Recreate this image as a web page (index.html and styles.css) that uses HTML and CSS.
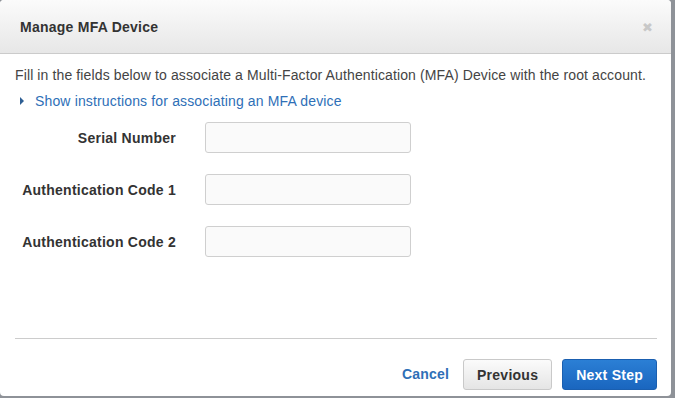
FILE: index.html
```html
<!DOCTYPE html>
<html lang="en">
<head>
    <meta charset="UTF-8">
    <title>Manage MFA Device</title>
    <link rel="stylesheet" href="styles.css">
</head>
<body>
    <div class="dialog">
        <div class="dialog-header">
            <h1>Manage MFA Device</h1>
            <span class="close">&#x2716;</span>
        </div>
        <div class="dialog-body">
            <p class="intro">Fill in the fields below to associate a Multi-Factor Authentication (MFA) Device with the root account.</p>
            <p class="toggle"><span class="caret"></span><a href="#">Show instructions for associating an MFA device</a></p>
            <form class="fields" action="#">
                <div class="row">
                    <label for="serial">Serial Number</label>
                    <input id="serial" type="text">
                </div>
                <div class="row">
                    <label for="code1">Authentication Code 1</label>
                    <input id="code1" type="text">
                </div>
                <div class="row">
                    <label for="code2">Authentication Code 2</label>
                    <input id="code2" type="text">
                </div>
            </form>
        </div>
        <div class="dialog-footer">
            <a class="cancel" href="#">Cancel</a>
            <button class="btn">Previous</button>
            <button class="btn primary">Next Step</button>
        </div>
    </div>
</body>
</html>
```

FILE: styles.css
```css
* {
    box-sizing: border-box;
    margin: 0;
    padding: 0;
}

body {
    background-color: #8e9298;
    font-family: Arial, "Liberation Sans", sans-serif;
    font-size: 14px;
    color: #333;
    width: 675px;
    height: 398px;
    overflow: hidden;
}

a {
    color: #2e6fb7;
    text-decoration: none;
}

.dialog {
    width: 671px;
    height: 396px;
    background-color: #fff;
    border-radius: 4px;
    display: flex;
    flex-direction: column;
    overflow: hidden;
}

.dialog-header {
    height: 54px;
    flex-shrink: 0;
    display: flex;
    align-items: center;
    justify-content: space-between;
    padding: 0 18px 0 20px;
    background: linear-gradient(#fbfbfb, #e7e7e7);
    border-bottom: 1px solid #cbcbcb;
}

.dialog-header h1 {
    font-size: 14px;
    letter-spacing: 0.25px;
    font-weight: bold;
    color: #333;
    padding-top: 1px;
}

.close {
    color: #c8c8c8;
    font-size: 13px;
    padding-top: 2px;
}

.dialog-body {
    flex: 1;
    padding: 11px 15px 0 15px;
}

.intro {
    font-size: 14px;
    letter-spacing: 0.12px;
    color: #444;
    line-height: 20px;
}

.toggle {
    font-size: 14px;
    letter-spacing: 0.15px;
    line-height: 20px;
    margin-top: 6px;
    padding-left: 5px;
    display: flex;
    align-items: center;
}

.caret {
    width: 0;
    height: 0;
    border-top: 4px solid transparent;
    border-bottom: 4px solid transparent;
    border-left: 4px solid #2e5f94;
    margin-right: 11px;
}

.fields {
    margin-top: 11px;
    display: flex;
    flex-direction: column;
    gap: 21px;
}

.row {
    display: flex;
    align-items: center;
}

.row label {
    width: 161px;
    text-align: right;
    font-weight: bold;
    font-size: 14px;
    letter-spacing: 0.25px;
    color: #333;
    margin-right: 29px;
    white-space: nowrap;
}

.row input {
    width: 206px;
    height: 31px;
    border: 1px solid #cfcfcf;
    border-radius: 3px;
    background-color: #fafafa;
}

.dialog-footer {
    flex-shrink: 0;
    height: 58px;
    margin: 0 14px 0 15px;
    border-top: 1px solid #cccccc;
    padding-top: 20px;
    display: flex;
    align-items: flex-start;
    justify-content: flex-end;
}

.cancel {
    font-weight: bold;
    font-size: 14px;
    letter-spacing: 0.2px;
    line-height: 31px;
    margin-right: 4px;
}

.btn {
    height: 31px;
    padding: 0 13px;
    border: 1px solid #c9c9c9;
    border-radius: 3px;
    font-family: inherit;
    font-size: 14px;
    letter-spacing: 0.25px;
    font-weight: bold;
    color: #333;
    background: linear-gradient(#fbfbfb, #e5e5e5);
    margin-left: 10px;
}

.btn.primary {
    color: #fff;
    border-color: #1a5fb0;
    background: linear-gradient(#2b7fd5, #1a66bf);
}
```
